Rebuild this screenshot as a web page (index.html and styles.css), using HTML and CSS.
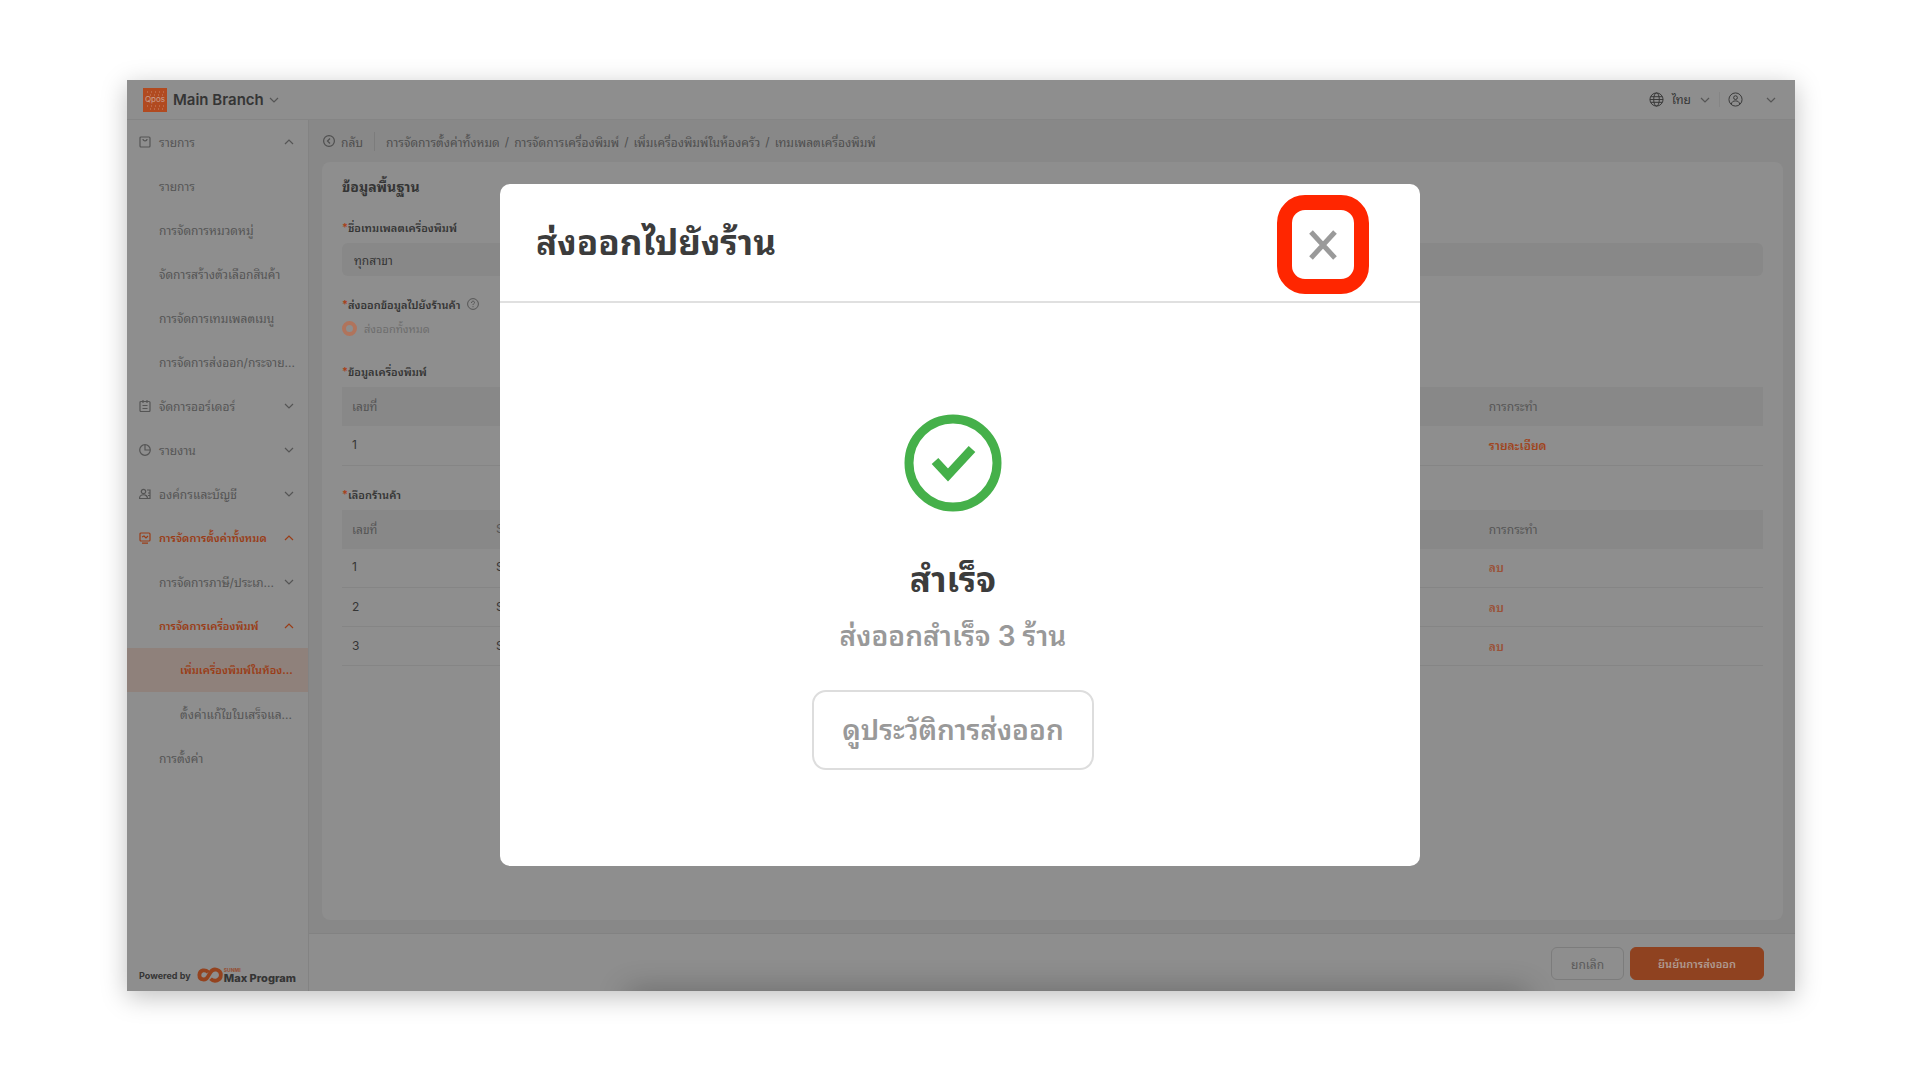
FILE: index.html
```
<!DOCTYPE html>
<html lang="th">
<head>
    <meta charset="UTF-8">
    <meta name="viewport" content="width=device-width, initial-scale=1.0">
    <title>Main Branch</title>
    <link rel="stylesheet" href="styles.css">
</head>
<body>
    <!-- shared icons -->
    <svg class="sprite" aria-hidden="true">
        <symbol id="down" viewBox="0 0 12 12"><path d="M2 4l4 4 4-4"/></symbol>
        <symbol id="up" viewBox="0 0 12 12"><path d="M2 8l4-4 4 4"/></symbol>
    </svg>

    <div class="window">
        <header class="topbar">
            <svg class="logo" viewBox="0 0 24 24">
                <rect class="logo-bg" width="24" height="24"/>
                <path class="logo-dots" d="M4 4h18M7 7h14M4 18h18M7 21h14"/>
                <text x="12" y="14">Qpos</text>
            </svg>
            <button class="branch">Main Branch <svg class="icon"><use href="#down"/></svg></button>
            <div class="account">
                <button class="lang">
                    <svg class="icon icon-lg" viewBox="0 0 16 16"><circle cx="8" cy="8" r="7"/><ellipse cx="8" cy="8" rx="3" ry="7"/><path d="M1 8h14M2 5h12M2 11h12"/></svg>
                    <span>ไทย</span>
                    <svg class="icon"><use href="#down"/></svg>
                </button>
                <button class="user" aria-label="User">
                    <svg class="icon icon-lg" viewBox="0 0 16 16"><circle cx="8" cy="8" r="7"/><circle cx="8" cy="6" r="2"/><path d="M3.500 13c.5-2.500 2-3.500 4.500-3.500s4 1 4.500 3.500"/></svg>
                    <svg class="icon"><use href="#down"/></svg>
                </button>
            </div>
        </header>

        <div class="body">
            <aside class="sidebar">
                <nav>
                    <a class="item" href="#"><svg class="icon" viewBox="0 0 12 12"><rect x="1" y="1" width="10" height="10" rx="1"/><path d="M4 3c0 2.500 4 2.500 4 0"/></svg><span>รายการ</span><svg class="icon"><use href="#up"/></svg></a>
                    <a class="item sub" href="#"><span>รายการ</span></a>
                    <a class="item sub" href="#"><span>การจัดการหมวดหมู่</span></a>
                    <a class="item sub" href="#"><span>จัดการสร้างตัวเลือกสินค้า</span></a>
                    <a class="item sub" href="#"><span>การจัดการเทมเพลตเมนู</span></a>
                    <a class="item sub" href="#"><span>การจัดการส่งออก/กระจาย...</span></a>
                    <a class="item" href="#"><svg class="icon" viewBox="0 0 12 12"><rect x="1" y="1.500" width="10" height="10" rx="1"/><path d="M4 0v3M8 0v3M3.500 5.500h5M3.500 8.500h5"/></svg><span>จัดการออร์เดอร์</span><svg class="icon"><use href="#down"/></svg></a>
                    <a class="item" href="#"><svg class="icon" viewBox="0 0 12 12"><circle cx="6" cy="6" r="5.300"/><path d="M6 1v5h5"/></svg><span>รายงาน</span><svg class="icon"><use href="#down"/></svg></a>
                    <a class="item" href="#"><svg class="icon" viewBox="0 0 12 12"><circle cx="4.500" cy="3.500" r="2.200"/><path d="M.5 10.500c0-5 8-5 8 0zM8 2h3v8.500h-2M9 5h2M9 7.500h2"/></svg><span>องค์กรและบัญชี</span><svg class="icon"><use href="#down"/></svg></a>
                    <a class="item on" href="#"><svg class="icon" viewBox="0 0 12 12"><rect x="1" y="1" width="10" height="8" rx="1"/><path d="M3 5l2-1 2 2 2-2M3 11.200h6"/></svg><span>การจัดการตั้งค่าทั้งหมด</span><svg class="icon"><use href="#up"/></svg></a>
                    <a class="item sub" href="#"><span>การจัดการภาษี/ประเภ...</span><svg class="icon"><use href="#down"/></svg></a>
                    <a class="item sub on" href="#"><span>การจัดการเครื่องพิมพ์</span><svg class="icon"><use href="#up"/></svg></a>
                    <a class="item leaf on current" href="#"><span>เพิ่มเครื่องพิมพ์ในห้อง...</span></a>
                    <a class="item leaf" href="#"><span>ตั้งค่าแก้ไขใบเสร็จแล...</span></a>
                    <a class="item sub" href="#"><span>การตั้งค่า</span></a>
                </nav>
                <div class="powered">
                    <span>Powered by</span>
                    <svg class="infinity" viewBox="0 0 28 18"><path d="M12 6C9 3 3 3 2.500 9c0 6 7 6 9 2l3-5c3-5 11-3 11 3s-7 8-11 4"/></svg>
                    <span class="brand"><small>SUNMI</small>Max Program</span>
                </div>
            </aside>

            <main class="main">
                <div class="crumbs">
                    <a class="back" href="#"><svg class="icon" viewBox="0 0 12 12"><circle cx="6" cy="6" r="5.400"/><path d="M7 3.500L4.500 6 7 8.500"/></svg>กลับ</a>
                    <a href="#">การจัดการตั้งค่าทั้งหมด</a><i>/</i>
                    <a href="#">การจัดการเครื่องพิมพ์</a><i>/</i>
                    <a href="#">เพิ่มเครื่องพิมพ์ในห้องครัว</a><i>/</i>
                    <span>เทมเพลตเครื่องพิมพ์</span>
                </div>

                <section class="card">
                    <h1>ข้อมูลพื้นฐาน</h1>
                    <label class="label" for="tplName">ชื่อเทมเพลตเครื่องพิมพ์</label>
                    <input class="field" id="tplName" type="text" value="ทุกสาขา">
                    <div class="label">ส่งออกข้อมูลไปยังร้านค้า
                        <svg class="icon" viewBox="0 0 12 12"><circle cx="6" cy="6" r="5.400"/><path d="M4.500 5c0-2.500 3-2.200 3-.5 0 1.200-1.500 1.200-1.500 2.500M6 8.200v1"/></svg>
                    </div>
                    <label class="radio"><input type="radio" name="scope" checked disabled>ส่งออกทั้งหมด</label>

                    <div class="label">ข้อมูลเครื่องพิมพ์</div>
                    <table>
                        <thead><tr><th class="no">เลขที่</th><th></th><th class="act">การกระทำ</th></tr></thead>
                        <tbody>
                            <tr><td>1</td><td></td><td><a class="detail" href="#">รายละเอียด</a></td></tr>
                        </tbody>
                    </table>

                    <div class="label">เลือกร้านค้า</div>
                    <table>
                        <thead><tr><th class="no">เลขที่</th><th>S</th><th class="act">การกระทำ</th></tr></thead>
                        <tbody>
                            <tr><td>1</td><td>S</td><td><a href="#">ลบ</a></td></tr>
                            <tr><td>2</td><td>S</td><td><a href="#">ลบ</a></td></tr>
                            <tr><td>3</td><td>S</td><td><a href="#">ลบ</a></td></tr>
                        </tbody>
                    </table>
                </section>

                <footer class="actions">
                    <button class="btn">ยกเลิก</button>
                    <button class="btn primary">ยืนยันการส่งออก</button>
                </footer>
            </main>
        </div>

        <div class="overlay">
            <div class="modal" role="dialog" aria-labelledby="modalTitle">
                <div class="modal-head">
                    <h2 id="modalTitle">ส่งออกไปยังร้าน</h2>
                    <button class="close" aria-label="Close"><svg viewBox="0 0 28 30"><path d="M2 2l24 26M26 2L2 28"/></svg></button>
                </div>
                <div class="modal-body">
                    <svg class="done" viewBox="0 0 98 98"><circle cx="49" cy="49" r="44"/><path d="M31 47l13 14 24-26"/></svg>
                    <h3>สำเร็จ</h3>
                    <p>ส่งออกสำเร็จ 3 ร้าน</p>
                    <button class="history">ดูประวัติการส่งออก</button>
                </div>
            </div>
        </div>
        <div class="shade"></div>
    </div>
</body>
</html>
```
FILE: styles.css
```
* {
    box-sizing: border-box;
}
body {
    margin: 0;
    height: 100vh;
    padding: 80px 125px 89px 127px;
    background: #fff;
    color: #353535;
    font-family: "Inter", "Noto Sans Thai Looped", "Loma", "Garuda", "Waree", "Noto Sans", sans-serif;
    font-size: 12px;
}
a {
    color: inherit;
    text-decoration: none;
}
button, input {
    font: inherit;
    color: inherit;
}
button {
    background: none;
    border: none;
    padding: 0;
}
.sprite {
    display: none;
}
.icon {
    width: 12px;
    height: 12px;
    flex: none;
    fill: none;
    stroke: currentColor;
    stroke-width: 1.2;
}
.icon-lg {
    width: 15px;
    height: 15px;
    stroke-width: 1;
}

/* App window */
.window {
    position: relative;
    height: 100%;
    display: flex;
    flex-direction: column;
    background: #8e8e8e;
    box-shadow: 0 6px 24px rgba(0, 0, 0, 0.25);
    overflow: hidden;
}
.topbar {
    display: flex;
    align-items: center;
    height: 40px;
    padding: 0 18px 0 16px;
    border-bottom: 1px solid #858585;
}
.logo {
    width: 24px;
    height: 24px;
    margin-right: 6px;
}
.logo-bg {
    fill: #b14a20;
}
.logo-dots {
    stroke: #c9866a;
    stroke-dasharray: 1 3;
    stroke-width: 1;
}
.logo text {
    fill: #c9a090;
    font-size: 8px;
    text-anchor: middle;
}
.branch {
    display: flex;
    align-items: center;
    gap: 4px;
    font-size: 15px;
    font-weight: 600;
}
.branch .icon {
    color: #555;
}
.account {
    display: flex;
    align-items: center;
    margin-left: auto;
}
.lang, .user {
    display: flex;
    align-items: center;
    gap: 8px;
}
.lang .icon:last-child, .user .icon:last-child {
    color: #555;
}
.user {
    gap: 22px;
    margin-left: 8px;
    padding-left: 8px;
    border-left: 1px solid #858585;
}
.body {
    flex: 1;
    display: flex;
    min-height: 0;
}

/* Sidebar */
.sidebar {
    width: 182px;
    flex: none;
    display: flex;
    flex-direction: column;
    justify-content: space-between;
    border-right: 1px solid #838383;
    color: #555;
}
.item {
    display: flex;
    align-items: center;
    gap: 8px;
    height: 44px;
    padding: 0 13px 0 12px;
    white-space: nowrap;
}
.item span, .lang span {
    flex: 1;
    padding-bottom: 2px;
}
.sub {
    padding-left: 32px;
}
.leaf {
    padding-left: 53px;
}
.on {
    color: #9a3d17;
    font-size: 11px;
    font-weight: 600;
}
.current {
    background: #8f817b;
}
.powered {
    display: flex;
    align-items: center;
    gap: 6px;
    padding: 0 12px 7px;
    color: #353535;
    font-size: 9px;
    font-weight: 700;
    white-space: nowrap;
}
.infinity {
    width: 28px;
    height: 18px;
    fill: none;
    stroke: #94431f;
    stroke-width: 4;
}
.brand {
    margin-left: -5px;
    font-size: 11px;
    font-weight: 800;
    line-height: 10px;
}
.brand small {
    display: block;
    color: #94533a;
    font-size: 5px;
    line-height: 5px;
}

/* Main column */
.main {
    flex: 1;
    display: flex;
    flex-direction: column;
    min-width: 0;
    background: #888;
}
.crumbs {
    display: flex;
    align-items: center;
    height: 42px;
    padding-left: 14px;
    color: #4f4f4f;
}
.crumbs i {
    margin: 0 5px;
    font-style: normal;
}
.back {
    display: flex;
    align-items: center;
    gap: 6px;
    margin-right: 11px;
    padding-right: 11px;
    border-right: 1px solid #7c7c7c;
}
.card {
    flex: 1;
    margin: 0 12px 13px 13px;
    padding: 13px 20px;
    border-radius: 8px;
    background: #8e8e8e;
}
.card h1 {
    margin: 0 0 16px;
    font-size: 14px;
    line-height: 24px;
}
.label {
    display: flex;
    align-items: center;
    height: 24px;
    font-size: 11px;
    font-weight: 600;
}
.label::before {
    content: "*";
    color: #a84119;
}
.label .icon {
    margin-left: 6px;
    color: #555;
    stroke-width: 1;
}
.field {
    display: block;
    width: 100%;
    height: 33px;
    margin: 4px 0 16px;
    padding: 0 12px;
    border: none;
    border-radius: 6px;
    background: #888;
}
.radio {
    display: flex;
    align-items: center;
    gap: 7px;
    height: 24px;
    color: #6d6d6d;
    font-size: 11px;
}
.radio input {
    appearance: none;
    width: 15px;
    height: 15px;
    margin: 0;
    border: 4px solid #b0745c;
    border-radius: 50%;
}
.radio + .label {
    margin-top: 19px;
}
table {
    width: 100%;
    margin: 4px 0 16px;
    border-collapse: collapse;
    table-layout: fixed;
}
th, td {
    height: 39px;
    padding: 0 10px 2px;
    text-align: left;
    font-weight: 400;
}
th {
    background: #888;
    color: #555;
}
td {
    border-bottom: 1px solid #858585;
}
.no {
    width: 144px;
}
.act {
    width: 20%;
}
td a {
    color: #9a5238;
    font-weight: 600;
}
.detail {
    color: #a04520;
}
.actions {
    display: flex;
    justify-content: flex-end;
    gap: 6px;
    height: 58px;
    padding: 13px 31px 0;
    border-top: 1px solid #828282;
    background: #8e8e8e;
}
.btn {
    height: 33px;
    padding: 0 19px 1px;
    border: 1px solid #7c7c7c;
    border-radius: 6px;
    color: #5a5a5a;
}
.primary {
    padding: 0 27px 1px;
    border-color: #8f4220;
    background: #8f4220;
    color: #b09a90;
    font-size: 11px;
    font-weight: 600;
}

/* Dialog */
.overlay {
    position: absolute;
    inset: 0;
    display: flex;
    align-items: flex-start;
    justify-content: center;
    padding-top: 104px;
}
.modal {
    width: 920px;
    height: 682px;
    margin-right: 2px;
    border-radius: 10px;
    background: #fff;
}
.modal-head {
    display: flex;
    align-items: center;
    justify-content: space-between;
    height: 119px;
    padding: 4px 51px 0 36px;
    border-bottom: 2px solid #e0e0e0;
}
.modal-head h2 {
    margin: 0;
    padding-bottom: 12px;
    font-size: 35px;
    color: #3c3c3c;
}
.close {
    width: 92px;
    height: 99px;
    border: 15px solid #ff2600;
    border-radius: 28px;
}
.close svg {
    display: block;
    width: 28px;
    height: 30px;
    margin: 0 auto;
    fill: none;
    stroke: #9a9a9a;
    stroke-width: 5;
}
.modal-body {
    display: flex;
    flex-direction: column;
    align-items: center;
    padding: 111px 14px 0 0;
}
.done {
    width: 98px;
    height: 98px;
    fill: none;
    stroke: #45b04a;
    stroke-width: 9;
}
.modal-body h3 {
    margin: 41px 0 0;
    font-size: 35px;
    line-height: 52px;
    color: #3c3c3c;
}
.modal-body p {
    margin: 9px 0 32px;
    font-size: 28px;
    line-height: 44px;
    color: #999;
    font-weight: 600;
}
.history {
    height: 80px;
    padding: 0 28px 6px;
    border: 2px solid #ddd;
    border-radius: 14px;
    font-size: 28px;
    font-weight: 600;
    color: #999;
}

/* soft shadow along the bottom edge */
.shade {
    position: absolute;
    top: 100%;
    left: 30%;
    right: 16%;
    height: 20px;
    box-shadow: 0 0 30px rgba(0, 0, 0, 0.3);
}
```
